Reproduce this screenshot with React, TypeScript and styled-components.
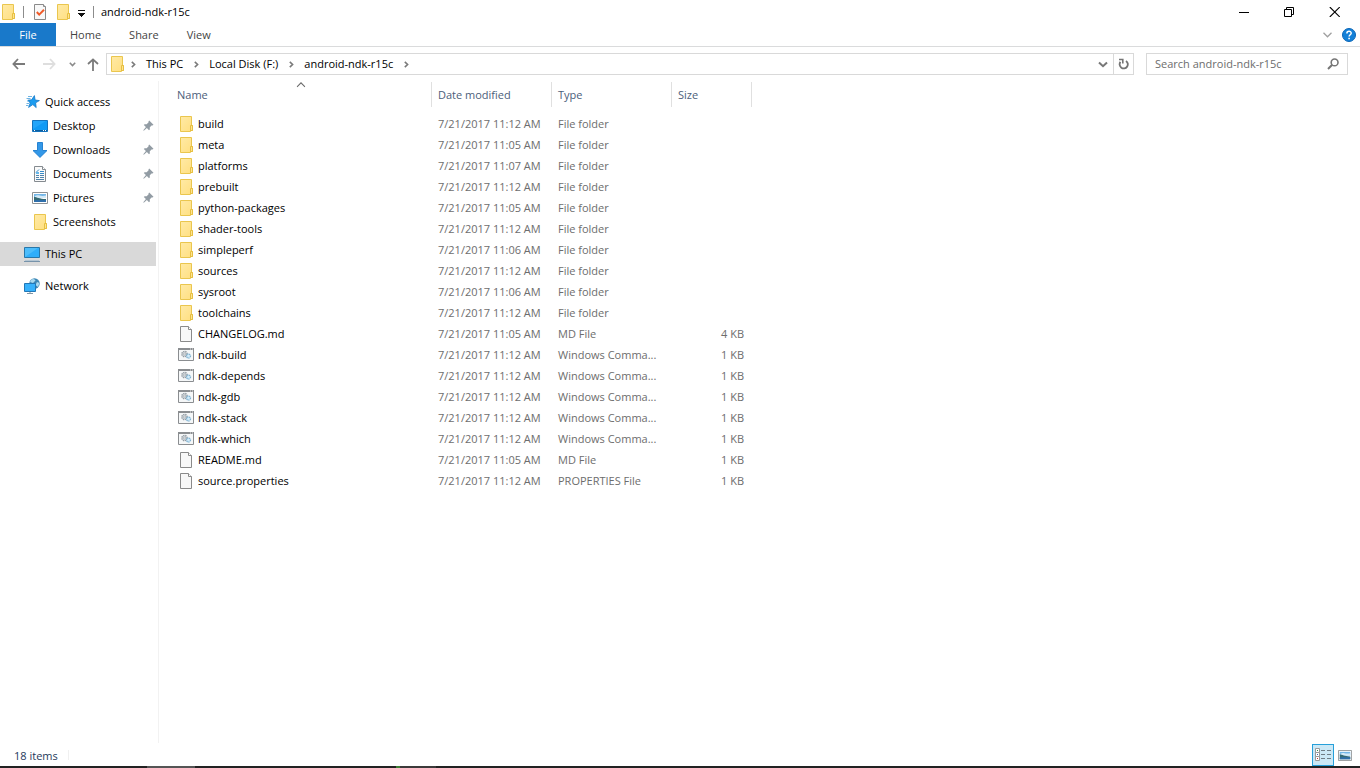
import React from "react";
import styled, { createGlobalStyle, css } from "styled-components";

const GlobalStyle = createGlobalStyle`
  * { box-sizing: border-box; }
  body {
    margin: 0;
    background: #fff;
    color: #000;
    font: 11px/16px "Open Sans", "Noto Sans", sans-serif;
  }
  button, input { font: inherit; color: inherit; }
  svg { display: block; flex: none; }
`;

const Window = styled.div`
  display: flex;
  flex-direction: column;
  min-height: 100vh;
  background: #fff;
`;

const plainButton = css`
  display: flex;
  align-items: center;
  justify-content: center;
  padding: 0;
  border: 0;
  background: transparent;
`;

/* Title bar */

const TitleBar = styled.header`
  display: flex;
  align-items: center;
  justify-content: space-between;
  height: 23px;
`;

const QuickTools = styled.div`
  display: flex;
  align-items: center;
`;

const ToolButton = styled.button<{ $width: number; $start?: boolean }>`
  ${plainButton}
  width: ${(p) => p.$width}px;
  height: 23px;
  justify-content: ${(p) => (p.$start ? "flex-start" : "center")};
`;

const ToolDivider = styled.span`
  width: 1px;
  height: 12px;
  background: #8c8c8c;
`;

const WindowTitle = styled.h1`
  margin: 0;
  padding-left: 7px;
  font-size: 11px;
  font-weight: 400;
  line-height: 23px;
`;

const Caption = styled.div`
  display: flex;
  padding-right: 3px;
`;

const CaptionButton = styled.button`
  ${plainButton}
  width: 45px;
  height: 20px;
`;

/* Ribbon */

const Ribbon = styled.div`
  display: flex;
  justify-content: space-between;
  height: 24px;
  border-bottom: 1px solid #dadbdc;
`;

const RibbonTabs = styled.div`
  display: flex;
`;

const RibbonTab = styled.button<{ $file?: boolean }>`
  ${plainButton}
  height: 23px;
  padding: 0 14px;
  color: #444;
  ${(p) =>
    p.$file &&
    css`
      width: 56px;
      background: #1979ca;
      color: #fff;
    `}
`;

const RibbonTools = styled.div`
  display: flex;
  align-items: center;
  gap: 10px;
  padding-right: 4px;
`;

const IconButton = styled.button`
  ${plainButton}
`;

/* Address row */

const AddressRow = styled.div`
  display: flex;
  align-items: center;
  height: 34px;
  padding: 0 12px;
`;

const NavButtons = styled.nav`
  display: flex;
  align-items: center;
  width: 94px;
`;

const NavButton = styled.button<{ $gap?: number }>`
  ${plainButton}
  height: 22px;
  margin-right: ${(p) => p.$gap ?? 0}px;
`;

const AddressBox = styled.div`
  display: flex;
  flex: 1;
  align-items: center;
  height: 22px;
  border: 1px solid #d9d9d9;
`;

const Crumbs = styled.div`
  display: flex;
  flex: 1;
  align-items: center;
  padding-left: 2px;
`;

const CrumbArrow = styled.span`
  display: flex;
  justify-content: center;
  width: 16px;
`;

const Crumb = styled.button`
  ${plainButton}
  height: 20px;
  padding: 0 5px;
`;

const BoxButton = styled.button<{ $divided?: boolean }>`
  ${plainButton}
  width: 20px;
  height: 20px;
  border-left: ${(p) => (p.$divided ? "1px solid #d9d9d9" : "0")};
`;

const SearchBox = styled.label`
  display: flex;
  align-items: center;
  width: 202px;
  height: 22px;
  margin-left: 12px;
  padding: 0 8px;
  border: 1px solid #d9d9d9;
`;

const SearchInput = styled.input`
  flex: 1;
  min-width: 0;
  padding: 0;
  border: 0;
  outline: 0;
  background: transparent;
  &::placeholder { color: #6d6d6d; opacity: 1; }
`;

/* Body */

const Body = styled.div`
  display: flex;
  flex: 1;
`;

const Sidebar = styled.nav`
  width: 159px;
  padding: 9px 2px 0 0;
  border-right: 1px solid #f2f2f2;
`;

const TreeList = styled.ul`
  margin: 0 0 8px;
  padding: 0;
  list-style: none;
`;

const TreeItem = styled.a<{ $nested?: boolean; $selected?: boolean }>`
  display: flex;
  align-items: center;
  gap: 5px;
  height: 24px;
  padding-left: ${(p) => (p.$nested ? 32 : 24)}px;
  padding-right: 2px;
  background: ${(p) => (p.$selected ? "#d9d9d9" : "transparent")};
  color: #000;
  text-decoration: none;
`;

const TreeLabel = styled.span`
  flex: 1;
`;

const FilePane = styled.main`
  flex: 1;
  padding: 1px 0 0 11px;
`;

const FileTable = styled.table`
  width: 582px;
  table-layout: fixed;
  border-collapse: separate;
  border-spacing: 0;
`;

const HeadCell = styled.th<{ $first?: boolean }>`
  position: relative;
  height: 25px;
  padding: 0 0 0 ${(p) => (p.$first ? 7 : 6)}px;
  border-right: 1px solid #e0e0e0;
  color: #4c607a;
  font-weight: 400;
  text-align: left;
`;

const SortMark = styled.span`
  position: absolute;
  top: 0;
  left: 50%;
  transform: translateX(-50%);
`;

const HeadGap = styled.tr`
  height: 6px;
`;

const Cell = styled.td<{ $right?: boolean }>`
  height: 21px;
  padding: 0 ${(p) => (p.$right ? 8 : 0)}px 0 6px;
  color: #6d6d6d;
  text-align: ${(p) => (p.$right ? "right" : "left")};
  white-space: nowrap;
`;

const NameCell = styled(Cell)`
  padding-left: 8px;
  color: #000;
`;

const FileName = styled.span`
  display: flex;
  align-items: center;
  gap: 4px;
`;

/* Status bar */

const StatusBar = styled.footer`
  display: flex;
  justify-content: space-between;
  height: 23px;
  padding-right: 4px;
  padding-left: 14px;
`;

const StatusCount = styled.span`
  height: 10px;
  margin-top: 7px;
  padding-right: 10px;
  border-right: 1px solid #f0f0f0;
  color: #1e395b;
  line-height: 12px;
`;

const ViewButtons = styled.div`
  display: flex;
`;

const ViewButton = styled.button<{ $active?: boolean }>`
  ${plainButton}
  width: 22px;
  height: 22px;
  margin-top: 1px;
  border: ${(p) => (p.$active ? "1px solid #26a0da" : "0")};
  background: ${(p) => (p.$active ? "#cbe8f6" : "transparent")};
`;

const TaskStrip = styled.div`
  display: flex;
  height: 2px;
  background: #222;
`;

const StripPart = styled.span<{ $width: number; $color: string }>`
  width: ${(p) => p.$width}px;
  background: ${(p) => p.$color};
`;

/* Icons */

const FolderIcon = () => (
  <svg width="16" height="18" viewBox="0 0 16 18">
    <defs>
      <linearGradient id="folderFill" x1="0" y1="0" x2="1" y2="1">
        <stop offset="0" stopColor="#ffeaa6" />
        <stop offset="1" stopColor="#ffdf80" />
      </linearGradient>
    </defs>
    <path d="M2.5 1.5H13.5V10.5H14.5V15.5H12.5V16.5H2.5Z" fill="url(#folderFill)" stroke="#eac64e" />
    <path d="M12.5 16V10.5H14.5V15.5H12.5" fill="#ffe48f" stroke="#e6bf42" />
  </svg>
);

const FileIcon = () => (
  <svg width="16" height="18" viewBox="0 0 16 18">
    <path d="M2.5 1.5H10.5L13.5 4.5V16.5H2.5Z" fill="#f8f8f8" stroke="#8a8a8a" />
    <path d="M10.5 1.5V4.5H13.5" fill="#fff" stroke="#8a8a8a" />
  </svg>
);

const CommandIcon = () => (
  <svg width="16" height="18" viewBox="0 0 16 18">
    <path d="M.5 2.5H15.5V14.5H.5Z" fill="#f5f7f8" stroke="#8a8d90" />
    <path d="M0 3H16" stroke="#8a8d90" strokeWidth="2" />
    <path d="M12 3h1M14 3h1" stroke="#e8e8e8" />
    <circle cx="6.5" cy="8" r="2.6" fill="#dde2e6" stroke="#949ca3" strokeWidth="1.4" strokeDasharray="1.4 .7" />
    <circle cx="6.5" cy="8" r="1" fill="#fff" stroke="#949ca3" strokeWidth=".7" />
    <circle cx="10.5" cy="10" r="2" fill="#d2ebfa" stroke="#7eb2d2" strokeWidth="1.3" strokeDasharray="1.2 .6" />
  </svg>
);

const CheckDocIcon = () => (
  <svg width="13" height="18" viewBox="0 0 13 18">
    <path d="M.5 1.5H9.5L11.5 3.5V16.5H.5Z" fill="#f8f8f8" stroke="#8a8a8a" />
    <path d="M9.5 1.5V3.5H11.5" fill="#fff" stroke="#8a8a8a" />
    <path d="M2.8 9L5.2 11.6L10 6.8" fill="none" stroke="#f05a28" strokeWidth="2" />
  </svg>
);

const ToolMenuIcon = () => (
  <svg width="7" height="11" viewBox="0 0 7 11" shapeRendering="crispEdges">
    <path d="M0 4H7V5H0ZM0 7H7V8H6V9H5V10H4V11H3V10H2V9H1V8H0Z" fill="#111" />
  </svg>
);

const MinimizeIcon = () => (
  <svg width="11" height="10" viewBox="0 0 11 10">
    <path d="M0 5.5H10" stroke="#000" />
  </svg>
);

const RestoreIcon = () => (
  <svg width="11" height="10" viewBox="0 0 11 10" fill="none" stroke="#000">
    <path d="M.5 2.5H7.5V9.5H.5ZM2.5 2.5V.5H9.5V7.5H7.5" />
  </svg>
);

const CloseIcon = () => (
  <svg width="11" height="10" viewBox="0 0 11 10">
    <path d="M.8 0L10.8 10M10.8 0L.8 10" stroke="#000" strokeWidth="1.1" />
  </svg>
);

const RibbonChevron = () => (
  <svg width="9" height="6" viewBox="0 0 9 6">
    <path d="M.5 .8L4.5 4.8L8.5 .8" fill="none" stroke="#a0a0a0" strokeWidth="1.3" />
  </svg>
);

const HelpIcon = () => (
  <svg width="14" height="14" viewBox="0 0 14 14">
    <circle cx="7" cy="7" r="6.5" fill="#1581d8" stroke="#0a66b8" />
    <path d="M4.9 5.4C4.9 2.6 9.2 2.7 9.2 5.2C9.2 6.8 7.1 6.8 7.1 8.6" fill="none" stroke="#fff" strokeWidth="1.5" />
    <path d="M6.3 9.7H7.9V11.3H6.3Z" fill="#fff" />
  </svg>
);

const BackIcon = () => (
  <svg width="13" height="12" viewBox="0 0 13 12">
    <path d="M6 1L1.4 6L6 11M1.5 6H13" fill="none" stroke="#7a7a7a" strokeWidth="1.8" />
  </svg>
);

const ForwardIcon = () => (
  <svg width="13" height="12" viewBox="0 0 13 12">
    <path d="M7 1L11.6 6L7 11M11.5 6H0" fill="none" stroke="#dedede" strokeWidth="1.8" />
  </svg>
);

const UpIcon = () => (
  <svg width="12" height="13" viewBox="0 0 12 13">
    <path d="M1 6L6 1.4L11 6M6 1.5V13" fill="none" stroke="#7a7a7a" strokeWidth="1.8" />
  </svg>
);

const RecentIcon = () => (
  <svg width="7" height="5" viewBox="0 0 7 5">
    <path d="M.8 .8L3.5 3.5L6.2 .8" fill="none" stroke="#8a8a8a" strokeWidth="1.6" />
  </svg>
);

const CrumbIcon = () => (
  <svg width="5" height="7" viewBox="0 0 5 7">
    <path d="M.8 .8L3.6 3.5L.8 6.2" fill="none" stroke="#7a7a7a" strokeWidth="1.6" />
  </svg>
);

const DropIcon = () => (
  <svg width="10" height="7" viewBox="0 0 10 7">
    <path d="M1 1.4L5 5.2L9 1.4" fill="none" stroke="#787878" strokeWidth="2" />
  </svg>
);

const RefreshIcon = () => (
  <svg width="11" height="12" viewBox="0 0 11 12">
    <path d="M8 2.9A4.1 4.1 0 1 1 2.4 3.9" fill="none" stroke="#747474" strokeWidth="1.8" />
    <path d="M1 1.5H4.8V5.6" fill="none" stroke="#747474" strokeWidth="1.6" />
  </svg>
);

const SearchIcon = () => (
  <svg width="12" height="12" viewBox="0 0 12 12">
    <circle cx="7.6" cy="4.4" r="3.4" fill="none" stroke="#757575" strokeWidth="1.6" />
    <path d="M5.2 6.8L1 11" stroke="#757575" strokeWidth="2" />
  </svg>
);

const SortIcon = () => (
  <svg width="9" height="6" viewBox="0 0 9 6">
    <path d="M.5 4.8L4.5 .8L8.5 4.8" fill="none" stroke="#6b6b6b" strokeWidth="1.1" />
  </svg>
);

const PinIcon = () => (
  <svg width="11" height="12" viewBox="0 0 11 12">
    <path d="M6.2 .5L10.5 4.8L9.6 5.6L8.9 5.2L6.8 7.3V9.4L6 10.2L3.9 8.1L.8 10.7L.3 10.2L2.9 7.1L.8 5L1.6 4.2H3.7L5.8 2.1L5.4 1.4Z" fill="#929ca4" />
  </svg>
);

const StarIcon = () => (
  <svg width="16" height="16" viewBox="0 0 16 16">
    <path d="M10.4 1.6L11.1 6L15.4 6.6L11.6 8.8L12.2 13.6L8.8 10.6L4.6 13.4L6.2 9L3.8 6.2L7.6 5.8Z" fill="#1a9cf0" stroke="#1679c8" strokeWidth=".8" />
    <path d="M4 2.5H8M2.5 4.5H6.5M3.5 7.5H5M2.5 9.5H5M2 11.5H4.5" stroke="#6eb4e4" />
  </svg>
);

const DesktopIcon = () => (
  <svg width="16" height="16" viewBox="0 0 16 16">
    <path d="M.5 2.5H15.5V13.5H.5Z" fill="#22a5fa" stroke="#1473be" />
    <path d="M1 11L14 3H15V12H1Z" fill="#109af5" />
    <path d="M1 12.5H15" stroke="#0c5d9e" />
    <path d="M2 12.5H3M11 12.5H12M13 12.5H14" stroke="#fff" />
  </svg>
);

const DownloadIcon = () => (
  <svg width="16" height="16" viewBox="0 0 16 16">
    <path d="M5.5 .5H10.5V8.5H15L8 15.4L1 8.5H5.5Z" fill="#3398e8" stroke="#2683d2" />
  </svg>
);

const DocumentIcon = () => (
  <svg width="16" height="16" viewBox="0 0 16 16">
    <path d="M2.5 .5H10.5L13.5 3.5V15.5H2.5Z" fill="#fafafa" stroke="#858b90" />
    <path d="M10.5 .5V3.5H13.5" fill="#fff" stroke="#858b90" />
    <path d="M4 6.5L7 3.5M8 5.5H12M8 7.5H12" stroke="#368bc8" />
    <path d="M4 9.5H7M8 9.5H12M4 11.5H7M8 11.5H12M4 13.5H12" stroke="#4e83ac" />
    <path d="M4 6H7V8H4Z" fill="#65b8eb" />
  </svg>
);

const PictureIcon = ({ small = false }: { small?: boolean }) => (
  <svg width={small ? 14 : 16} height={small ? 11 : 12} viewBox="0 0 16 12" preserveAspectRatio="none">
    <path d="M.5 .5H15.5V11.5H.5Z" fill="#fff" stroke="#8e9295" />
    <path d="M2 2H14V6H2Z" fill="#74b7e8" />
    <path d="M3 4C6 2 8 5 14 3.5V6H3Z" fill="#d4eaf7" />
    <path d="M2 5C5 5 7 7 14 7V10H2Z" fill="#356a74" />
    <path d="M2 8.5C6 7.5 9 8.2 14 8V10H2Z" fill="#2f6fab" />
  </svg>
);

const ComputerIcon = () => (
  <svg width="16" height="16" viewBox="0 0 16 16">
    <path d="M.5 1.5H15.5V11.5H.5Z" fill="#4dbdfb" stroke="#2877a9" />
    <path d="M1 11L14 2H15V11Z" fill="#30aefa" />
    <path d="M1 14.5H15" stroke="#b5c6d3" />
    <path d="M0 15.5H16" stroke="#7793aa" />
  </svg>
);

const NetworkIcon = () => (
  <svg width="16" height="16" viewBox="0 0 16 16">
    <circle cx="10.5" cy="5.5" r="5.2" fill="#3c87b5" />
    <path d="M7 2C9 0 11 1 11.5 2.5L9 5L6 4ZM13 4L15.5 5L14 9L11.5 7Z" fill="#a9d8ee" />
    <path d="M.5 5.5H11.5V13.5H.5Z" fill="#36b1fb" stroke="#2277b6" />
    <path d="M3 15.5H9" stroke="#8196a5" />
    <path d="M5.5 14H6.5V15H5.5Z" fill="#8196a5" />
  </svg>
);

const DetailsIcon = () => (
  <svg width="16" height="14" viewBox="0 0 16 14">
    <path d="M.5 .5H4.5V4.5H.5ZM.5 4.5H4.5V8.5H.5ZM.5 8.5H4.5V12.5H.5Z" fill="#fff" stroke="#9a9a9a" />
    <path d="M2 2.5H3" stroke="#35884a" />
    <path d="M2 6.5H3" stroke="#3569b0" />
    <path d="M2 10.5H3" stroke="#c83232" />
    <path d="M6 2.5H10M12 2.5H16M6 6.5H10M12 6.5H16M6 10.5H10M12 10.5H16" stroke="#6e7d86" />
  </svg>
);

const places = [
  { label: "Desktop", icon: <DesktopIcon />, pinned: true },
  { label: "Downloads", icon: <DownloadIcon />, pinned: true },
  { label: "Documents", icon: <DocumentIcon />, pinned: true },
  { label: "Pictures", icon: <PictureIcon />, pinned: true },
  { label: "Screenshots", icon: <FolderIcon />, pinned: false },
];

type Kind = "folder" | "file" | "command";
type Entry = { name: string; time: string; type: string; size: string; kind: Kind };

const folder = (name: string, time: string): Entry => ({ name, time, type: "File folder", size: "", kind: "folder" });
const command = (name: string): Entry => ({ name, time: "11:12", type: "Windows Comma...", size: "1 KB", kind: "command" });

const entries: Entry[] = [
  folder("build", "11:12"),
  folder("meta", "11:05"),
  folder("platforms", "11:07"),
  folder("prebuilt", "11:12"),
  folder("python-packages", "11:05"),
  folder("shader-tools", "11:12"),
  folder("simpleperf", "11:06"),
  folder("sources", "11:12"),
  folder("sysroot", "11:06"),
  folder("toolchains", "11:12"),
  { name: "CHANGELOG.md", time: "11:05", type: "MD File", size: "4 KB", kind: "file" },
  command("ndk-build"),
  command("ndk-depends"),
  command("ndk-gdb"),
  command("ndk-stack"),
  command("ndk-which"),
  { name: "README.md", time: "11:05", type: "MD File", size: "1 KB", kind: "file" },
  { name: "source.properties", time: "11:12", type: "PROPERTIES File", size: "1 KB", kind: "file" },
];

const kindIcons: Record<Kind, React.ReactNode> = {
  folder: <FolderIcon />,
  file: <FileIcon />,
  command: <CommandIcon />,
};

export default function App() {
  return (
    <Window>
      <GlobalStyle />
      <TitleBar>
        <QuickTools>
          <ToolButton $width={23} $start aria-label="Window menu"><FolderIcon /></ToolButton>
          <ToolDivider />
          <ToolButton $width={33} aria-label="Properties"><CheckDocIcon /></ToolButton>
          <ToolButton $width={12} aria-label="New folder"><FolderIcon /></ToolButton>
          <ToolButton $width={24} aria-label="Customize toolbar"><ToolMenuIcon /></ToolButton>
          <ToolDivider />
          <WindowTitle>android-ndk-r15c</WindowTitle>
        </QuickTools>
        <Caption>
          <CaptionButton aria-label="Minimize"><MinimizeIcon /></CaptionButton>
          <CaptionButton aria-label="Restore"><RestoreIcon /></CaptionButton>
          <CaptionButton aria-label="Close"><CloseIcon /></CaptionButton>
        </Caption>
      </TitleBar>

      <Ribbon>
        <RibbonTabs>
          <RibbonTab $file>File</RibbonTab>
          <RibbonTab>Home</RibbonTab>
          <RibbonTab>Share</RibbonTab>
          <RibbonTab>View</RibbonTab>
        </RibbonTabs>
        <RibbonTools>
          <IconButton aria-label="Expand the ribbon"><RibbonChevron /></IconButton>
          <IconButton aria-label="Help"><HelpIcon /></IconButton>
        </RibbonTools>
      </Ribbon>

      <AddressRow>
        <NavButtons aria-label="History">
          <NavButton $gap={18} aria-label="Back"><BackIcon /></NavButton>
          <NavButton $gap={13} aria-label="Forward"><ForwardIcon /></NavButton>
          <NavButton $gap={11} aria-label="Recent locations"><RecentIcon /></NavButton>
          <NavButton aria-label="Up"><UpIcon /></NavButton>
        </NavButtons>
        <AddressBox>
          <Crumbs>
            <FolderIcon />
            <CrumbArrow><CrumbIcon /></CrumbArrow>
            <Crumb>This PC</Crumb>
            <CrumbArrow><CrumbIcon /></CrumbArrow>
            <Crumb>Local Disk (F:)</Crumb>
            <CrumbArrow><CrumbIcon /></CrumbArrow>
            <Crumb>android-ndk-r15c</Crumb>
            <CrumbArrow><CrumbIcon /></CrumbArrow>
          </Crumbs>
          <BoxButton aria-label="Previous locations"><DropIcon /></BoxButton>
          <BoxButton $divided aria-label="Refresh"><RefreshIcon /></BoxButton>
        </AddressBox>
        <SearchBox>
          <SearchInput type="text" aria-label="Search android-ndk-r15c" placeholder="Search android-ndk-r15c" />
          <SearchIcon />
        </SearchBox>
      </AddressRow>

      <Body>
        <Sidebar aria-label="Places">
          <TreeList>
            <li>
              <TreeItem href="#quick-access"><StarIcon /><TreeLabel>Quick access</TreeLabel></TreeItem>
            </li>
            {places.map((p) => (
              <li key={p.label}>
                <TreeItem $nested href={`#${p.label.toLowerCase()}`}>
                  {p.icon}
                  <TreeLabel>{p.label}</TreeLabel>
                  {p.pinned && <PinIcon />}
                </TreeItem>
              </li>
            ))}
          </TreeList>
          <TreeList>
            <li>
              <TreeItem $selected href="#this-pc"><ComputerIcon /><TreeLabel>This PC</TreeLabel></TreeItem>
            </li>
          </TreeList>
          <TreeList>
            <li>
              <TreeItem href="#network"><NetworkIcon /><TreeLabel>Network</TreeLabel></TreeItem>
            </li>
          </TreeList>
        </Sidebar>

        <FilePane>
          <FileTable>
            <colgroup>
              <col width="262" />
              <col width="120" />
              <col width="120" />
              <col width="80" />
            </colgroup>
            <thead>
              <tr>
                <HeadCell $first aria-sort="ascending">
                  Name
                  <SortMark><SortIcon /></SortMark>
                </HeadCell>
                <HeadCell>Date modified</HeadCell>
                <HeadCell>Type</HeadCell>
                <HeadCell>Size</HeadCell>
              </tr>
              <HeadGap />
            </thead>
            <tbody>
              {entries.map((e) => (
                <tr key={e.name}>
                  <NameCell>
                    <FileName>{kindIcons[e.kind]}{e.name}</FileName>
                  </NameCell>
                  <Cell>7/21/2017 {e.time} AM</Cell>
                  <Cell>{e.type}</Cell>
                  <Cell $right>{e.size}</Cell>
                </tr>
              ))}
            </tbody>
          </FileTable>
        </FilePane>
      </Body>

      <StatusBar>
        <StatusCount>18 items</StatusCount>
        <ViewButtons>
          <ViewButton $active aria-label="Details view"><DetailsIcon /></ViewButton>
          <ViewButton aria-label="Large icons view"><PictureIcon small /></ViewButton>
        </ViewButtons>
      </StatusBar>
      <TaskStrip>
        <StripPart $width={147} $color="#222" />
        <StripPart $width={48} $color="#555" />
        <StripPart $width={201} $color="#222" />
        <StripPart $width={4} $color="#3f7d35" />
        <StripPart $width={36} $color="#3c3a3a" />
      </TaskStrip>
    </Window>
  );
}
